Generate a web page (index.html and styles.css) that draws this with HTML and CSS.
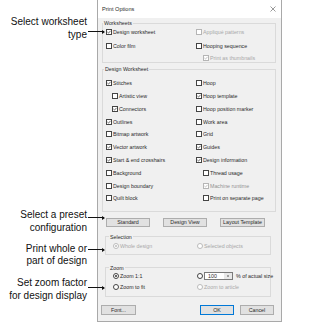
FILE: index.html
```html
<!DOCTYPE html>
<html>
<head>
<meta charset="utf-8">
<link rel="stylesheet" href="styles.css">
</head>
<body>
<div class="stage">
  <div class="callout c1">Select worksheet<br>type</div>
  <div class="arrow a1"></div>
  <div class="callout c2">Select a preset<br>configuration</div>
  <div class="arrow a2"></div>
  <div class="callout c3">Print whole or<br>part of design</div>
  <div class="arrow a3"></div>
  <div class="callout c4">Set zoom factor<br>for design display</div>
  <div class="arrow a4"></div>

  <div class="dialog">
    <div class="titlebar">
      <span class="title">Print Options</span>
      <svg class="close" width="6" height="6" viewBox="0 0 6 6"><path d="M0.5 0.5 L5.5 5.5 M5.5 0.5 L0.5 5.5" stroke="#555" stroke-width="0.6" fill="none"/></svg>
    </div>
    <div class="body">
      <fieldset class="group g-sheets">
        <legend>Worksheets</legend>
        <div class="grid sheets-grid">
          <div class="item"><span class="cb"><svg class="chk" viewBox="0 0 4 4"><path d="M0.4 2 L1.5 3.1 L3.6 0.8"/></svg></span>Design worksheet</div>
          <div class="item dis"><span class="cb"></span>Appliqué patterns</div>
          <div class="item"><span class="cb"></span>Color film</div>
          <div class="item"><span class="cb"></span>Hooping sequence</div>
          <div></div>
          <div class="item dis in2"><span class="cb"><svg class="chk" viewBox="0 0 4 4"><path d="M0.4 2 L1.5 3.1 L3.6 0.8"/></svg></span>Print as thumbnails</div>
        </div>
      </fieldset>

      <fieldset class="group g-design">
        <legend>Design Worksheet</legend>
        <div class="grid design-grid">
          <div class="item"><span class="cb"><svg class="chk" viewBox="0 0 4 4"><path d="M0.4 2 L1.5 3.1 L3.6 0.8"/></svg></span>Stitches</div>
          <div class="item"><span class="cb"></span>Hoop</div>
          <div class="item in1"><span class="cb"></span>Artistic view</div>
          <div class="item"><span class="cb"><svg class="chk" viewBox="0 0 4 4"><path d="M0.4 2 L1.5 3.1 L3.6 0.8"/></svg></span>Hoop template</div>
          <div class="item in1"><span class="cb"><svg class="chk" viewBox="0 0 4 4"><path d="M0.4 2 L1.5 3.1 L3.6 0.8"/></svg></span>Connectors</div>
          <div class="item"><span class="cb"></span>Hoop position marker</div>
          <div class="item"><span class="cb"><svg class="chk" viewBox="0 0 4 4"><path d="M0.4 2 L1.5 3.1 L3.6 0.8"/></svg></span>Outlines</div>
          <div class="item"><span class="cb"></span>Work area</div>
          <div class="item"><span class="cb"></span>Bitmap artwork</div>
          <div class="item"><span class="cb"></span>Grid</div>
          <div class="item"><span class="cb"><svg class="chk" viewBox="0 0 4 4"><path d="M0.4 2 L1.5 3.1 L3.6 0.8"/></svg></span>Vector artwork</div>
          <div class="item"><span class="cb"><svg class="chk" viewBox="0 0 4 4"><path d="M0.4 2 L1.5 3.1 L3.6 0.8"/></svg></span>Guides</div>
          <div class="item"><span class="cb"><svg class="chk" viewBox="0 0 4 4"><path d="M0.4 2 L1.5 3.1 L3.6 0.8"/></svg></span>Start &amp; end crosshairs</div>
          <div class="item"><span class="cb"><svg class="chk" viewBox="0 0 4 4"><path d="M0.4 2 L1.5 3.1 L3.6 0.8"/></svg></span>Design information</div>
          <div class="item"><span class="cb"></span>Background</div>
          <div class="item in2"><span class="cb"></span>Thread usage</div>
          <div class="item"><span class="cb"></span>Design boundary</div>
          <div class="item in2 half"><span class="cb"><svg class="chk" viewBox="0 0 4 4"><path d="M0.4 2 L1.5 3.1 L3.6 0.8"/></svg></span>Machine runtime</div>
          <div class="item"><span class="cb"></span>Quilt block</div>
          <div class="item in2"><span class="cb"></span>Print on separate page</div>
        </div>
      </fieldset>

      <div class="btn-row">
        <div class="btn w44">Standard</div>
        <div class="btn w44">Design View</div>
        <div class="btn w45">Layout Template</div>
      </div>

      <fieldset class="group g-sel">
        <legend>Selection</legend>
        <div class="grid sel-grid">
          <div class="item dis"><span class="rb on"></span>Whole design</div>
          <div class="item dis"><span class="rb"></span>Selected objects</div>
        </div>
      </fieldset>

      <fieldset class="group g-zoom">
        <legend>Zoom</legend>
        <div class="grid zoom-grid">
          <div class="item"><span class="rb on"></span>Zoom 1:1</div>
          <div class="item"><span class="rb"></span><span class="spin"><span class="spin-val">100</span><span class="spin-btns"><span class="up"></span><span class="down"></span></span></span><span class="pct">% of actual size</span></div>
          <div class="item"><span class="rb"></span>Zoom to fit</div>
          <div class="item dis"><span class="rb"></span>Zoom to article</div>
        </div>
      </fieldset>

      <div class="foot">
        <div class="btn b-font">Font...</div>
        <div class="btn b-ok">OK</div>
        <div class="btn b-cancel">Cancel</div>
      </div>
    </div>
  </div>
</div>
</body>
</html>
```
FILE: styles.css
```css
* { box-sizing: border-box; }
body {
  margin: 0;
  background: #fff;
  font-family: "Liberation Sans", Arial, sans-serif;
}
.stage {
  position: relative;
  width: 321px;
  height: 334px;
}

/* callouts */
.callout {
  position: absolute;
  left: 0;
  width: 87px;
  text-align: right;
  font-size: 10px;
  line-height: 12.5px;
  color: #111;
}
.c1 { top: 16px; }
.c2 { top: 209px; }
.c3 { top: 242.5px; }
.c4 { top: 277px; }
.arrow {
  position: absolute;
  left: 88px;
  width: 16px;
  height: 1px;
  background: #111;
  z-index: 2;
}
.arrow::after {
  content: "";
  position: absolute;
  right: -1px;
  top: -1.5px;
  border-left: 3px solid #111;
  border-top: 2px solid transparent;
  border-bottom: 2px solid transparent;
}
.a1 { top: 31px; }
.a2 { top: 217px; }
.a3 { top: 249px; }
.a4 { top: 287px; }

/* dialog */
.dialog {
  margin-left: 97px;
  width: 185px;
  height: 322px;
  border: 1px solid #a9a9a9;
  border-top: 0;
  background: #f0f0f0;
  display: flex;
  flex-direction: column;
  font-size: 5.3px;
  color: #2a2a2a;
}
.titlebar {
  height: 18px;
  flex: none;
  background: #fff;
  display: flex;
  align-items: center;
  justify-content: space-between;
  padding: 0 5px 0 4px;
  font-size: 5.6px;
}
.body {
  flex: 1;
  display: flex;
  flex-direction: column;
  padding: 0 5px 5px 4px;
}
fieldset {
  margin: 0;
  min-width: 0;
  border: 1px solid #dadada;
}
legend {
  padding: 0 1px;
  font-size: 5.3px;
  line-height: 6px;
}
.grid {
  display: grid;
  align-items: center;
}
.g-sheets { margin-top: 2px; padding: 0 0 0 3px; }
.g-sheets legend { margin-left: -3px; }
.sheets-grid {
  grid-template-columns: 90px 1fr;
  grid-template-rows: 12px 15px 9px;
}
.g-design { margin-top: 3px; padding: 5px 0 6px 3px; }
.g-design legend { margin-left: -2px; }
.design-grid {
  grid-template-columns: 90px 1fr;
  grid-template-rows: repeat(10, 12.78px);
}
.g-sel { margin: 7px 5px 0 3px; padding: 0 0 2px 7px; }
.g-sel legend, .g-zoom legend { margin-left: -4px; }
.sel-grid {
  grid-template-columns: 84px 1fr;
  grid-template-rows: 12px;
}
.g-zoom { margin: 10px 5px 0 3px; padding: 0 0 3px 7px; }
.zoom-grid {
  grid-template-columns: 84px 1fr;
  grid-template-rows: 11px 11px;
}

.item {
  display: flex;
  align-items: center;
  gap: 1px;
  line-height: 6px;
  white-space: nowrap;
}
.item.in1 { margin-left: 6px; }
.item.in2 { margin-left: 7px; }
.item.dis { color: #a8a8a8; }
.item.half { color: #909090; }

.cb {
  flex: none;
  display: flex;
  width: 6px;
  height: 6px;
  border: 1px solid #444;
  background: #fff;
}
.chk {
  width: 4px;
  height: 4px;
  fill: none;
  stroke: #3a3a3a;
  stroke-width: 0.75;
}
.dis .cb, .half .cb { border-color: #b5b5b5; }
.dis .chk, .half .chk { stroke: #b0b0b0; }

.rb {
  position: relative;
  flex: none;
  width: 6px;
  height: 6px;
  border: 1px solid #444;
  border-radius: 50%;
  background: #fff;
}
.rb.on::after {
  content: "";
  position: absolute;
  left: 1px;
  top: 1px;
  width: 2px;
  height: 2px;
  border-radius: 50%;
  background: #333;
}
.dis .rb { border-color: #bbb; }
.dis .rb.on::after { background: #bbb; }

.spin {
  display: flex;
  width: 29px;
  height: 8px;
  border: 1px solid #7a7a7a;
  background: #fff;
}
.spin-val {
  flex: 1;
  padding-left: 3px;
  line-height: 6px;
}
.spin-btns {
  width: 8px;
  display: flex;
  flex-direction: column;
  justify-content: center;
  align-items: center;
  gap: 0.5px;
  background: #e8e8e8;
}
.up, .down {
  width: 0;
  height: 0;
  border-left: 1.5px solid transparent;
  border-right: 1.5px solid transparent;
}
.up { border-bottom: 1.5px solid #555; }
.down { border-top: 1.5px solid #555; }
.pct { margin-left: 2px; }

.btn-row {
  display: flex;
  gap: 13px;
  margin: 6px 0 0 4px;
}
.btn {
  height: 9px;
  background: #e1e1e1;
  border: 1px solid #adadad;
  display: flex;
  align-items: center;
  justify-content: center;
  font-size: 5.3px;
  line-height: 6px;
  white-space: nowrap;
}
.w44 { width: 44px; }
.w45 { width: 45px; }
.foot {
  display: flex;
  margin-top: 8px;
}
.foot .btn { height: 10px; }
.b-font { width: 35px; margin-left: -1px; }
.b-ok { width: 34px; margin-left: auto; border-color: #0078d7; }
.b-cancel { width: 34px; margin-left: 6px; margin-right: 2px; }
```
